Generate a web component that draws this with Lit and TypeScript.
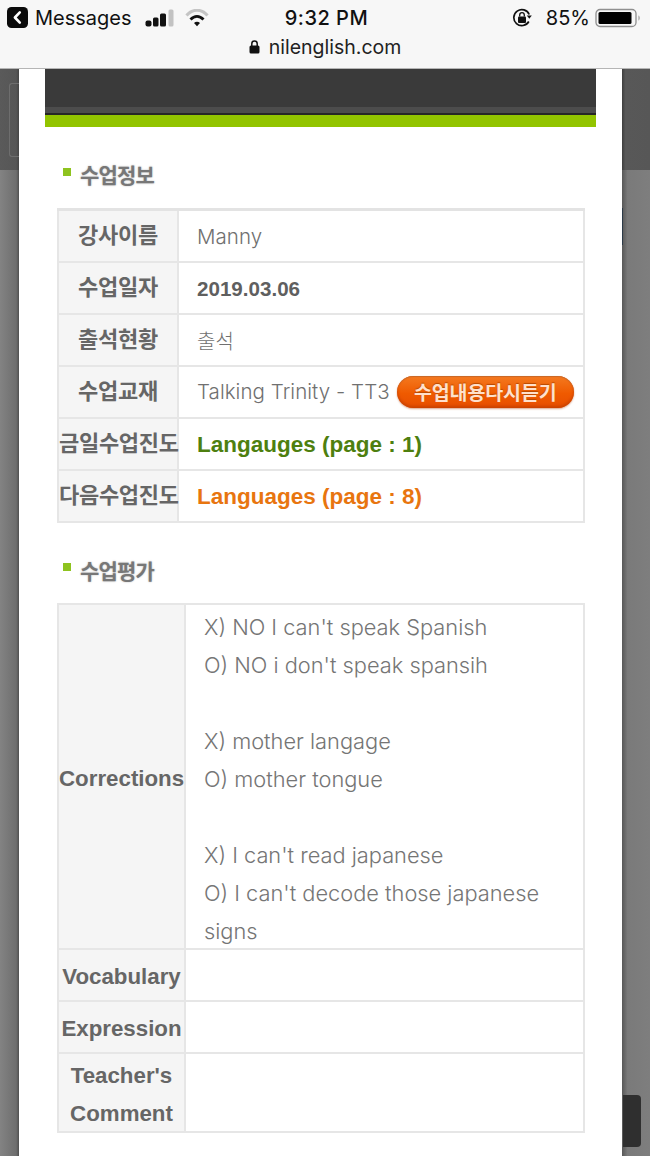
import { LitElement, html, css, svg } from "lit";
import { customElement } from "lit/decorators.js";

@customElement("app-root")
export class AppRoot extends LitElement {
  static styles = css`
    :host {
      display: block;
      width: 650px;
      height: 1156px;
      overflow: hidden;
      position: relative;
      font-family: "Liberation Sans", "Noto Sans CJK KR", sans-serif;
      background: #6f6f6f;
    }
    .status {
      height: 68px;
      background: #f7f7f7;
      border-bottom: 1px solid #b5b5b5;
      display: flex;
      flex-direction: column;
      position: relative;
      z-index: 2;
    }
    .row1 {
      height: 35px;
      display: grid;
      grid-template-columns: 1fr auto 1fr;
      align-items: center;
      padding: 0 0 0 7px;
      color: #111;
    }
    .left, .right { display: flex; align-items: center; }
    .right { justify-content: flex-end; padding-right: 9px; }
    .back { margin-right: 7px; }
    .msg { font-family: Inter, "Liberation Sans", sans-serif; font-size: 20px; margin-right: 13px; }
    .sig { margin-right: 10px; }
    .time { font-family: Inter, "Liberation Sans", sans-serif; font-size: 20px; font-weight: 500; letter-spacing: .5px; margin-left: -4px; }
    .pct { font-family: Inter, "Liberation Sans", sans-serif; font-size: 20px; margin: 0 5px 0 14px; }
    .url {
      display: flex;
      justify-content: center;
      align-items: center;
      gap: 9px;
      font-family: Inter, "Liberation Sans", sans-serif;
      font-size: 19.5px;
      color: #222;
      line-height: 24px;
    }
    .stage { height: 1087px; display: flex; justify-content: center; position: relative; }
    .shade { flex: 0 0 19px; background: linear-gradient(90deg, #5a5a5a, #565656 85%, #454545); }
    .shade.r { background: linear-gradient(90deg, #3e3e3e, #585858 12%, #575757); flex: 0 0 28px; }
    .ghost {
      position: absolute;
      left: 9px;
      top: 14px;
      width: 10px;
      height: 74px;
      box-sizing: border-box;
      border: 1px solid #6e6e6e;
      border-right: 0;
      border-radius: 3px 0 0 3px;
    }
    .band {
      position: absolute;
      top: 101px;
      bottom: 0;
      width: 19px;
      left: 0;
      background: linear-gradient(90deg, #838383, #6e6e6e 85%, #505050);
    }
    .band.r { left: auto; right: 0; width: 28px; background: linear-gradient(90deg, #585858, #7a7a7a 20%, #7e7e7e); }
    .tab {
      position: absolute;
      right: 9px;
      top: 1026px;
      width: 18px;
      height: 52px;
      background: #2f2f2f;
      border-radius: 0 4px 4px 0;
    }
    .edge {
      position: absolute;
      right: 27px;
      top: 139px;
      width: 1px;
      height: 37px;
      background: #2c3a48;
    }
    .modal { flex: 0 0 603px; background: #fff; padding: 0 26px; box-sizing: border-box; position: relative; }
    .hero { height: 58px; box-sizing: border-box; background: #3a3a3a; border-bottom: 12px solid #92c400; position: relative; }
    .hero::after { content: ""; position: absolute; left: 0; right: 0; bottom: 0; height: 8px; background: linear-gradient(#4c4c4c 0 6px, #262626 6px); }
    h3 {
      margin: 0;
      display: flex;
      align-items: center;
      gap: 9px;
      padding-left: 18px;
      font-size: 21px;
      font-weight: 700;
      color: #777;
      line-height: 30px;
      text-shadow: 0 0 2px #bbb;
      letter-spacing: -.8px;
    }
    h3 i { width: 8px; height: 8px; background: #8ec31f; display: block; margin-top: -9px; }
    h3.a { margin-top: 34px; }
    h3.b { margin-top: 34px; }
    table {
      border-collapse: collapse;
      margin-left: 12px;
      width: 528px;
      table-layout: fixed;
      font-size: 22px;
      color: #666;
    }
    .t1 { margin-top: 17px; border-top: 3px solid #e3e3e3; }
    .t2 { margin-top: 16px; }
    td, th { border: 2px solid #e6e6e6; padding: 0; box-sizing: border-box; }
    th {
      background: #f5f5f5;
      font-weight: 700;
      color: #666;
      text-align: center;
      line-height: 38px;
      white-space: nowrap;
    }
    .t1 tr { height: 52px; }
    .t1 th { letter-spacing: -.3px; }
    .t1 td { padding: 2px 0 0 18px; font-family: Inter, "Liberation Sans", "Noto Sans CJK KR", sans-serif; font-weight: 300; font-size: 20.5px; color: #707070; letter-spacing: .05px; }
    .t1 td .ko { font-family: "Noto Sans CJK KR", sans-serif; font-size: 20px; font-weight: 300; }
    .t2 th { font-size: 22.3px; }
    .t1 col.k { width: 120px; }
    .t2 col.k { width: 127px; }
    .t2 td { padding-left: 18px; line-height: 38px; color: #757575; font-family: Inter, "Liberation Sans", sans-serif; font-weight: 300; font-size: 21.8px; }
    .t2 tr.s { height: 52px; }
    .nudge { display: block; padding-top: 3px; margin-bottom: -2px; }
    b { font-family: "Liberation Sans", sans-serif; font-weight: 700; letter-spacing: 0; }
    .date { color: #5f5f5f; font-size: 20.6px; }
    .green { color: #4e7f0f; }
    .orange { color: #e8750f; }
    .green, .orange { font-size: 22.5px; }
    .wrap { display: flex; align-items: center; gap: 7px; white-space: nowrap; margin-top: -2px; }
    .btn {
      height: 32px;
      width: 177px;
      flex: none;
      border-radius: 16px;
      background: linear-gradient(#f47a20, #ef5a00 55%, #e84e00);
      box-shadow: inset 0 -2px 3px #c94200, inset 0 1px 1px #c96a2a, 0 1px 2px #d9a58c;
      color: #ffe0cc;
      font-family: "Liberation Sans", "Noto Sans CJK KR", sans-serif;
      font-size: 19.5px;
      font-weight: 700;
      display: flex;
      align-items: center;
      justify-content: center;
      letter-spacing: -.1px;
      text-shadow: 0 -1px 1px #b84a00;
    }
  `;

  render() {
    const back = svg`<rect x="0" y="0" width="21" height="21" rx="4.5" fill="#0b0b0b"/><path d="M12.8 5.4 7.9 10.5l4.9 5.1" fill="none" stroke="#fff" stroke-width="2.6" stroke-linecap="round" stroke-linejoin="round"/>`;
    const wifi = svg`<g fill="none"><path d="M1.5 6.500C7.500-.5 16.500-.5 22.500 6.500" stroke="#c4c4c4" stroke-width="3"/><path d="M5.500 10.500c4-4.300 9-4.300 13 0" stroke="#111" stroke-width="2.800"/></g><path d="M9 14c1.800-1.600 4.200-1.600 6 0l-3 3.300z" fill="#111"/>`;
    return html`
      <div class="status">
        <div class="row1">
          <div class="left">
            <svg class="back" width="21" height="21" viewBox="0 0 21 21">${back}</svg>
            <span class="msg">Messages</span>
            <svg class="sig" width="30" height="18" viewBox="0 0 30 18">
              <rect x="0.500" y="11.500" width="6" height="6" rx="2" fill="#111"/>
              <rect x="8" y="8.500" width="5.500" height="9" rx="1.500" fill="#111"/>
              <rect x="15" y="4.500" width="6" height="13" rx="1.500" fill="#111"/>
              <rect x="23.500" y="0.500" width="5" height="17" rx="1.500" fill="#c2c2c2"/>
            </svg>
            <svg width="24" height="18" viewBox="0 0 24 18">${wifi}</svg>
          </div>
          <span class="time">9:32 PM</span>
          <div class="right">
            <svg width="20" height="20" viewBox="0 0 20 20">
              <path d="M16.800 13.500A8 8 0 1 1 17.200 6.500" fill="none" stroke="#111" stroke-width="1.700"/>
              <path d="M14.800 7.500h5l-2.500 3.200z" fill="#111"/>
              <rect x="6" y="8.500" width="8" height="6.500" rx="1" fill="#111"/>
              <path d="M7.700 8.500V7a2.300 2.300 0 0 1 4.600 0v1.500" fill="none" stroke="#111" stroke-width="1.300"/>
            </svg>
            <span class="pct">85%</span>
            <svg width="46" height="20" viewBox="0 0 46 20">
              <rect x="1" y="1.500" width="40" height="17" rx="4" fill="none" stroke="#8f8f8f" stroke-width="1.300"/>
              <rect x="3.500" y="4" width="33" height="12" rx="1.500" fill="#000"/>
              <path d="M43.500 7.500c1.500.6 1.500 4.400 0 5z" fill="#8f8f8f"/>
            </svg>
          </div>
        </div>
        <div class="url">
          <svg width="11" height="14" viewBox="0 0 11 14">
            <rect x="0.500" y="5.500" width="10" height="8" rx="1.500" fill="#111"/>
            <path d="M2.800 6V3.800a2.700 2.700 0 0 1 5.400 0V6" fill="none" stroke="#111" stroke-width="1.500"/>
          </svg>
          <span>nilenglish.com</span>
        </div>
      </div>
      <div class="stage">
        <div class="shade"></div>
        <div class="modal">
          <div class="hero"></div>
          <h3 class="a"><i></i>수업정보</h3>
          <table class="t1">
            <colgroup><col class="k" /><col /></colgroup>
            <tr><th>강사이름</th><td>Manny</td></tr>
            <tr><th>수업일자</th><td><b class="date">2019.03.06</b></td></tr>
            <tr><th>출석현황</th><td><span class="ko">출석</span></td></tr>
            <tr><th>수업교재</th><td><div class="wrap">Talking Trinity - TT3<span class="btn">수업내용다시듣기</span></div></td></tr>
            <tr><th>금일수업진도</th><td><b class="green">Langauges (page : 1)</b></td></tr>
            <tr><th>다음수업진도</th><td><b class="orange">Languages (page : 8)</b></td></tr>
          </table>
          <h3 class="b"><i></i>수업평가</h3>
          <table class="t2">
            <colgroup><col class="k" /><col /></colgroup>
            <tr><th><span class="nudge">Corrections</span></th><td><span class="nudge">X) NO I can't speak Spanish<br />O) NO i don't speak spansih<br /><br />X) mother langage<br />O) mother tongue<br /><br />X) I can't read japanese<br />O) I can't decode those japanese signs</span></td></tr>
            <tr class="s"><th><span class="nudge">Vocabulary</span></th><td></td></tr>
            <tr class="s"><th><span class="nudge">Expression</span></th><td></td></tr>
            <tr><th><span class="nudge">Teacher's<br />Comment</span></th><td></td></tr>
          </table>
        </div>
        <div class="shade r"></div>
        <div class="ghost"></div>
        <div class="band"></div>
        <div class="band r"></div>
        <div class="edge"></div>
        <div class="tab"></div>
      </div>
    `;
  }
}
